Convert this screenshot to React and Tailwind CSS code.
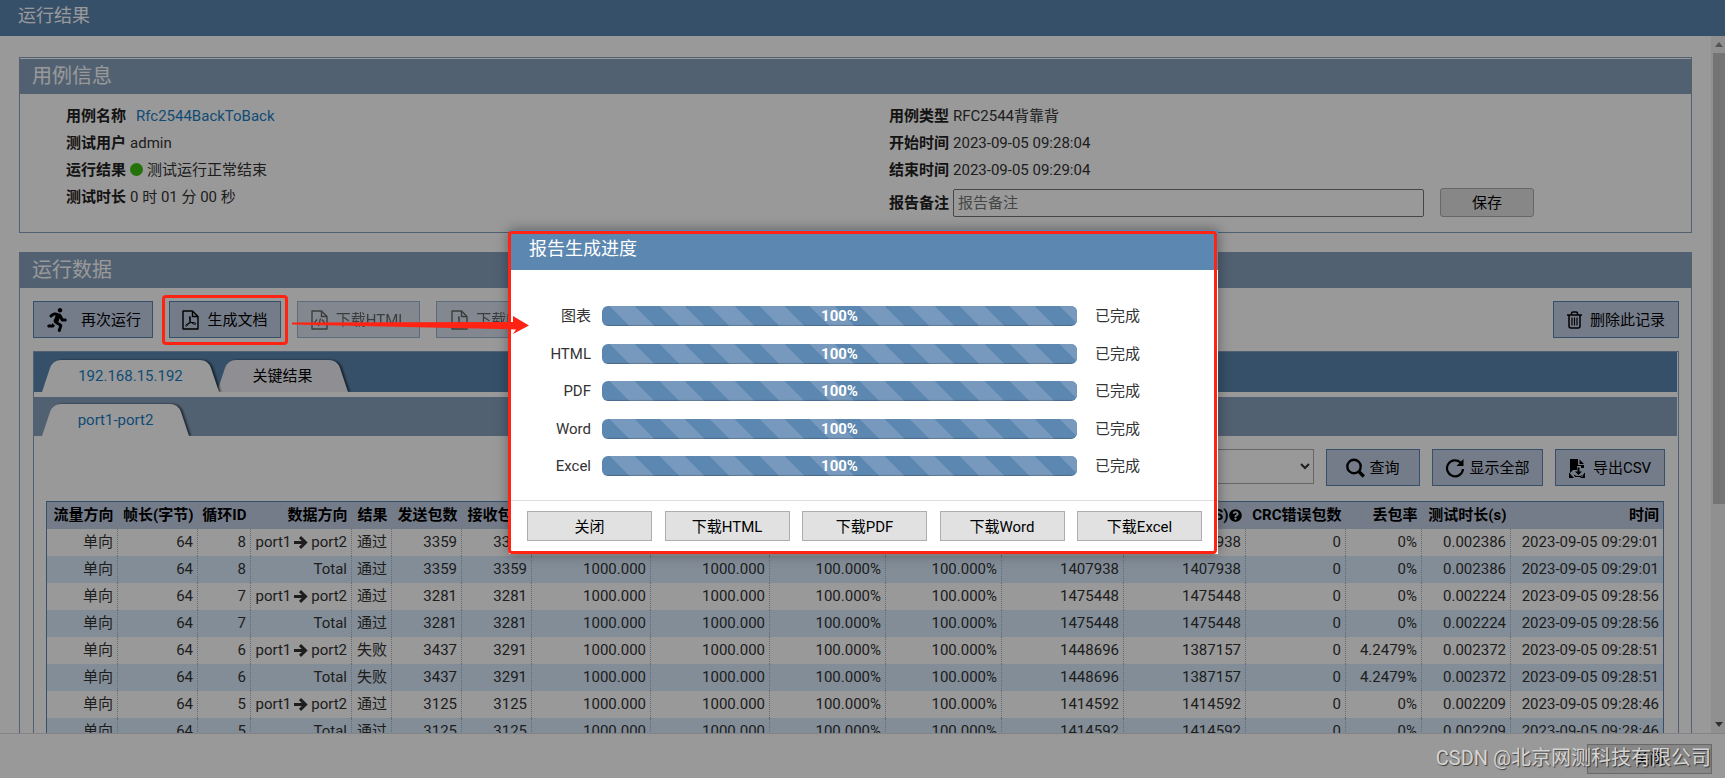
import { useState } from "react";
import { FaRunning, FaQuestionCircle } from "react-icons/fa";

const columns = [
    { title: "流量方向", width: "w-[71px]" },
    { title: "帧长(字节)", width: "w-[80px]" },
    { title: "循环ID", width: "w-[53px]" },
    { title: "数据方向", width: "w-[101px]" },
    { title: "结果", width: "w-[40px]" },
    { title: "发送包数", width: "w-[70px]" },
    { title: "接收包数", width: "w-[70px]" },
    { title: "期望速率", width: "w-[119px]" },
    { title: "实际速率", width: "w-[119px]" },
    { title: "期望负载", width: "w-[116px]" },
    { title: "实际负载", width: "w-[116px]" },
    { title: "发送(FPS)", width: "w-[122px]" },
    { title: "接收(FPS)", width: "w-[122px]", help: true },
    { title: "CRC错误包数", width: "w-[100px]" },
    { title: "丢包率", width: "w-[76px]" },
    { title: "测试时长(s)", width: "w-[89px]" },
    { title: "时间" },
];

const results = [
    { loop: 8, result: "通过", tx: 3359, rx: 3359, txFps: 1407938, rxFps: 1407938, loss: "0%", duration: "0.002386", time: "2023-09-05 09:29:01" },
    { loop: 7, result: "通过", tx: 3281, rx: 3281, txFps: 1475448, rxFps: 1475448, loss: "0%", duration: "0.002224", time: "2023-09-05 09:28:56" },
    { loop: 6, result: "失败", tx: 3437, rx: 3291, txFps: 1448696, rxFps: 1387157, loss: "4.2479%", duration: "0.002372", time: "2023-09-05 09:28:51" },
    { loop: 5, result: "通过", tx: 3125, rx: 3125, txFps: 1414592, rxFps: 1414592, loss: "0%", duration: "0.002209", time: "2023-09-05 09:28:46" },
];

// every loop has one row for the port pair and one total row
const rows = results.flatMap((r) => [
    { ...r, total: false },
    { ...r, total: true },
]);

const progress = [
    { name: "图表", value: 100 },
    { name: "HTML", value: 100 },
    { name: "PDF", value: 100 },
    { name: "Word", value: 100 },
    { name: "Excel", value: 100 },
];

function FileIcon({ children }) {
    return (
        <svg width="17" height="20" viewBox="0 0 17 20" fill="none" stroke="currentColor" strokeWidth="1.4">
            <path d="M1 1h9.5L16 6.5V19H1z" strokeLinejoin="round" />
            <path d="M10.5 1v5.5H16" />
            {children}
        </svg>
    );
}

function PdfIcon() {
    return (
        <FileIcon>
            <path d="M8 6.500c-.9 0-.7 2.500.3 4.700 1.100 1.900 3.500 3.400 5.200 3 .9-.6-.6-2-3.500-1.700-2.500.3-5.100 1.300-6.500 2.800M8 6.500c.9.500.5 3.200-.3 5.200-1 2.400-2.300 4.300-4 4.500" strokeWidth="1" />
        </FileIcon>
    );
}

function HtmlIcon() {
    return (
        <FileIcon>
            <path d="M6 9.500l-2.200 2.700L6 15M11 9.500l2.200 2.700L11 15M9.500 8.500l-2 7.500" strokeWidth="1.200" />
        </FileIcon>
    );
}

function TrashIcon() {
    return (
        <svg width="15" height="18" viewBox="0 0 15 18" fill="none" stroke="currentColor" strokeWidth="1.500">
            <path d="M0 4h15M4.500 4V2.500Q4.500 1 6 1h3q1.500 0 1.500 1.500V4M2 4v11q0 2 2 2h7q2 0 2-2V4" />
            <path d="M5 6.500v8M7.500 6.500v8M10 6.500v8" strokeWidth="1.200" />
        </svg>
    );
}

function SearchIcon() {
    return (
        <svg width="19" height="20" viewBox="0 0 19 20" fill="none" stroke="currentColor">
            <circle cx="8" cy="8.500" r="6.700" strokeWidth="2.400" />
            <path d="M12.800 13.500l5 5" strokeWidth="3.200" />
        </svg>
    );
}

function ReloadIcon() {
    return (
        <svg width="20" height="20" viewBox="0 0 20 20" fill="none" stroke="currentColor">
            <path d="M15.500 4.500A8 8 0 1 0 18 11" strokeWidth="2.200" />
            <path d="M18.500 1v7h-7z" fill="currentColor" stroke="none" />
        </svg>
    );
}

function ExportIcon() {
    return (
        <svg width="16" height="20" viewBox="0 0 16 20" fill="currentColor">
            <path d="M1 1h8v6h6v3h-3V8H8v4H4l-3 3z" />
            <path d="M10.500 1.500L15 6h-4.500z" />
            <path d="M8.500 9.500h2v4H13l-3.500 3.500L6 13.500h2.500z" />
            <path d="M0 14.500L5 20H0zM16 14.500L11 20h5zM4.500 16.500q5 3 10 0l-1.500 2.500H6z" />
        </svg>
    );
}

function ArrowIcon() {
    return (
        <svg className="mx-[3px] inline-block align-[-2px]" width="14" height="13" viewBox="0 0 14 13" fill="none" stroke="currentColor" strokeWidth="3">
            <path d="M0 6.500h11M6 1.200l5.500 5.300L6 11.800" />
        </svg>
    );
}

function ToolButton({ icon, children, className = "gap-2", disabled = false }) {
    return (
        <button
            type="button"
            disabled={disabled}
            className={`flex h-[37px] items-center justify-center border border-[#5b86b0] bg-[#c3cfe4] text-[15px] whitespace-nowrap text-black disabled:opacity-60 ${className}`}
        >
            {icon}
            <span>{children}</span>
        </button>
    );
}

function Tab({ width, label, active, onClick, className = "" }) {
    const shape = `M0 32L8 8Q11 0 19 0H${width - 19}Q${width - 11} 0 ${width - 8} 8L${width} 32Z`;
    return (
        <button
            type="button"
            onClick={onClick}
            style={{ width }}
            className={`relative h-8 text-[15px] ${active ? "z-[1] text-[#1a7dc4]" : "text-black"} ${className}`}
        >
            <svg className="absolute inset-0 drop-shadow-[2px_0px_1px_rgba(0,0,0,0.6)]" width={width} height="32">
                <path d={shape} fill={active ? "#ffffff" : "#eeeff6"} />
            </svg>
            <span className="relative">{label}</span>
        </button>
    );
}

function Info({ label, children }) {
    return (
        <div className="flex h-[27px] items-center gap-1">
            <span className="font-bold text-[#222]">{label}</span>
            {children}
        </div>
    );
}

function CaseInfo() {
    return (
        <section className="border border-[#87a2be] pt-px">
            <h2 className="h-[35px] bg-[#87a2be] pl-3 text-xl leading-[34px] text-white">用例信息</h2>
            <div className="grid h-[138px] grid-cols-2 pt-2 pl-[25px]">
                <div className="px-[21px]">
                    <Info label="用例名称">
                        <a href="#case" className="ml-1.5 text-[#1a7dc4]">Rfc2544BackToBack</a>
                    </Info>
                    <Info label="测试用户">admin</Info>
                    <Info label="运行结果">
                        <span className="h-[13px] w-[13px] rounded-full bg-[#3cbf12]" />
                        测试运行正常结束
                    </Info>
                    <Info label="测试时长">0 时 01 分 00 秒</Info>
                </div>
                <div className="px-[21px]">
                    <Info label="用例类型">RFC2544背靠背</Info>
                    <Info label="开始时间">2023-09-05 09:28:04</Info>
                    <Info label="结束时间">2023-09-05 09:29:04</Info>
                    <div className="mt-[5px] flex items-center gap-1">
                        <label htmlFor="remark" className="font-bold text-[#222]">报告备注</label>
                        <input
                            id="remark"
                            type="text"
                            placeholder="报告备注"
                            className="h-7 w-[471px] rounded-xs border border-[#767676] px-1 placeholder:text-[#757575]"
                        />
                        <button type="button" className="ml-3 h-[29px] w-[94px] rounded-[3px] border border-[#acacac] bg-[#e1e1e1] text-black">
                            保存
                        </button>
                    </div>
                </div>
            </div>
        </section>
    );
}

function ResultTable() {
    return (
        <table className="w-full table-fixed border border-[#5b86b0] text-right whitespace-nowrap">
            <thead>
                <tr className="h-[27px] bg-[#c3cfe4] text-black">
                    {columns.map((c) => (
                        <th key={c.title} className={`px-1 py-0 font-bold ${c.width || ""}`}>
                            {c.title}
                            {c.help && <FaQuestionCircle className="inline-block align-[-2px]" size={13} />}
                        </th>
                    ))}
                </tr>
            </thead>
            <tbody className="[&_td]:border-r [&_td]:border-dotted [&_td]:border-[#a3b5c8] [&_td]:px-1">
                {rows.map((r, i) => (
                    <tr key={i} className="h-[27px] even:bg-[#daecfd]">
                        <td>单向</td>
                        <td>64</td>
                        <td>{r.loop}</td>
                        <td>
                            {r.total ? "Total" : (
                                <span>
                                    port1
                                    <ArrowIcon />
                                    port2
                                </span>
                            )}
                        </td>
                        <td>{r.result}</td>
                        <td>{r.tx}</td>
                        <td>{r.rx}</td>
                        <td>1000.000</td>
                        <td>1000.000</td>
                        <td>100.000%</td>
                        <td>100.000%</td>
                        <td>{r.txFps}</td>
                        <td>{r.rxFps}</td>
                        <td>0</td>
                        <td>{r.loss}</td>
                        <td>{r.duration}</td>
                        <td>{r.time}</td>
                    </tr>
                ))}
            </tbody>
        </table>
    );
}

function RunData() {
    const [tab, setTab] = useState("192.168.15.192");

    return (
        <section className="mt-[19px] border border-[#87a2be]">
            <h2 className="h-[35px] bg-[#87a2be] pl-3 text-xl leading-[34px] text-white">运行数据</h2>
            <div className="py-[13px] pr-3 pl-[13px]">
                <div className="flex gap-4">
                    <ToolButton icon={<FaRunning size={24} />} className="w-[120px] gap-3">再次运行</ToolButton>
                    <div className="relative">
                        <ToolButton icon={<PdfIcon />} className="w-[112px] gap-2">生成文档</ToolButton>
                        {/* callout: frame round the button and arrow to the dialog */}
                        <div className="absolute -inset-x-[7px] -top-1.5 -bottom-[7px] z-30 rounded-[4px] border-[3px] border-[#ff2314]" />
                        <svg className="absolute top-[14px] left-[123px] z-30" width="238" height="20" viewBox="0 0 238 20">
                            <path d="M0 7.500L221 7L221 1L237 10.500L221 19L224 14.500L0 9.500Z" fill="#ff2314" />
                        </svg>
                    </div>
                    <ToolButton icon={<HtmlIcon />} className="w-[123px] gap-2" disabled>下载HTML</ToolButton>
                    <ToolButton icon={<PdfIcon />} className="w-[113px] gap-2" disabled>下载PDF</ToolButton>
                    <ToolButton icon={<TrashIcon />} className="ml-auto w-[126px] gap-2">删除此记录</ToolButton>
                </div>

                <div className="mt-[13px] border border-[#87a2be]">
                    <div className="mr-px flex h-10 items-end overflow-hidden bg-[#5b86b0] pl-2">
                        <Tab
                            width={177}
                            label="192.168.15.192"
                            active={tab === "192.168.15.192"}
                            onClick={() => setTab("192.168.15.192")}
                        />
                        <Tab
                            width={131}
                            label="关键结果"
                            active={tab === "关键结果"}
                            onClick={() => setTab("关键结果")}
                            className="-ml-0.5"
                        />
                    </div>
                    <div className="mt-[5px] mr-px flex h-[39px] items-end overflow-hidden bg-[#87a2be] pl-2">
                        <Tab width={147} label="port1-port2" active />
                    </div>

                    <div className="flex justify-end gap-3 pt-[13px] pr-[13px]">
                        <select
                            aria-label="结果"
                            className="h-[35px] w-[213px] border border-[#acacac] bg-white px-2"
                            defaultValue=""
                        >
                            <option value=""></option>
                            <option>通过</option>
                            <option>失败</option>
                        </select>
                        <ToolButton icon={<SearchIcon />} className="w-[94px] gap-1">查询</ToolButton>
                        <ToolButton icon={<ReloadIcon />} className="w-[111px] gap-1">显示全部</ToolButton>
                        <ToolButton icon={<ExportIcon />} className="w-[110px] gap-2">导出CSV</ToolButton>
                    </div>

                    <div className="pt-[15px] pr-[14px] pb-3 pl-3">
                        <ResultTable />
                    </div>
                </div>
            </div>
        </section>
    );
}

function ReportDialog() {
    const dialogButton = "h-[30px] w-[125px] border border-[#adadad] bg-[#e1e1e1] pt-0.5 text-black";
    return (
        <div role="dialog" aria-label="报告生成进度" className="relative z-20 h-[324px] w-[709px] bg-white shadow-[0_0_12px_rgba(0,0,0,0.4)]">
            <h2 className="h-10 bg-[#5c87b0] pl-5 text-lg leading-[38px] text-white">报告生成进度</h2>
            <div className="flex h-[231px] flex-col justify-between border-b border-[#ddd] pt-9 pb-6">
                {progress.map((p) => (
                    <div key={p.name} className="flex h-5 items-center">
                        <span className="w-[82px] text-right">{p.name}</span>
                        <div className="ml-[11px] h-5 w-[475px] overflow-hidden rounded-[6px] bg-[#eee]">
                            <div
                                style={{ width: `${p.value}%` }}
                                className="h-5 bg-[#5c87b0] bg-[linear-gradient(45deg,#7799bd_25%,transparent_25%,transparent_50%,#7799bd_50%,#7799bd_75%,transparent_75%)] bg-[size:50px_50px] bg-[position:8px_0px] text-center font-bold leading-5 text-white shadow-[inset_0_-1px_1px_rgba(0,0,0,0.2)]"
                            >
                                {p.value}%
                            </div>
                        </div>
                        <span className="ml-[18px]">已完成</span>
                    </div>
                ))}
            </div>
            <div className="flex justify-between pt-2.5 pr-4 pl-[18px]">
                <button type="button" className={dialogButton}>关闭</button>
                <button type="button" className={dialogButton}>下载HTML</button>
                <button type="button" className={dialogButton}>下载PDF</button>
                <button type="button" className={dialogButton}>下载Word</button>
                <button type="button" className={dialogButton}>下载Excel</button>
            </div>
            <div className="pointer-events-none absolute top-px right-px bottom-0 -left-px rounded-[4px] border-[3px] border-[#ff2314]" />
        </div>
    );
}

export default function App() {
    return (
        <div className="relative flex h-screen flex-col overflow-hidden bg-white font-[Roboto,'Noto_Sans_CJK_SC',sans-serif] text-[15px] leading-5 text-[#333]">
            <header className="h-9 shrink-0 bg-[#5b86b0] pl-[18px]">
                <h1 className="text-lg leading-8 text-white">运行结果</h1>
            </header>

            <div className="flex min-h-0 flex-1">
                <main className="flex-1 overflow-hidden px-[19px] pt-[21px]">
                    <CaseInfo />
                    <RunData />
                </main>
                <div className="flex w-[14px] flex-col items-center bg-[#f1f1f1] pl-0.5">
                    <svg width="8" height="17" viewBox="0 0 8 17" fill="#8a8a8a">
                        <path d="M0 11L4 6L8 11Z" />
                    </svg>
                    <div className="h-[451px] w-full bg-[#c1c1c1]" />
                    <svg className="mt-auto" width="8" height="17" viewBox="0 0 8 17" fill="#505050">
                        <path d="M0 6L4 11L8 6Z" />
                    </svg>
                </div>
            </div>

            <footer className="flex h-[45px] shrink-0 justify-end border-t border-[#ddd] pt-2.5 pr-[13px]">
                <button type="button" className="h-[30px] w-[125px] border border-[#adadad] bg-[#e1e1e1] text-black">关闭</button>
            </footer>

            <div className="absolute inset-0 z-10 bg-black/40" />
            <div className="absolute inset-x-0 top-[230px] z-20 flex justify-center pl-0.5">
                <ReportDialog />
            </div>
            <p className="absolute right-[14px] bottom-1.5 z-30 text-xl leading-7 text-[#d4d4d4] [text-shadow:1px_1px_1px_rgba(0,0,0,0.6)]">
                CSDN @北京网测科技有限公司
            </p>
        </div>
    );
}
